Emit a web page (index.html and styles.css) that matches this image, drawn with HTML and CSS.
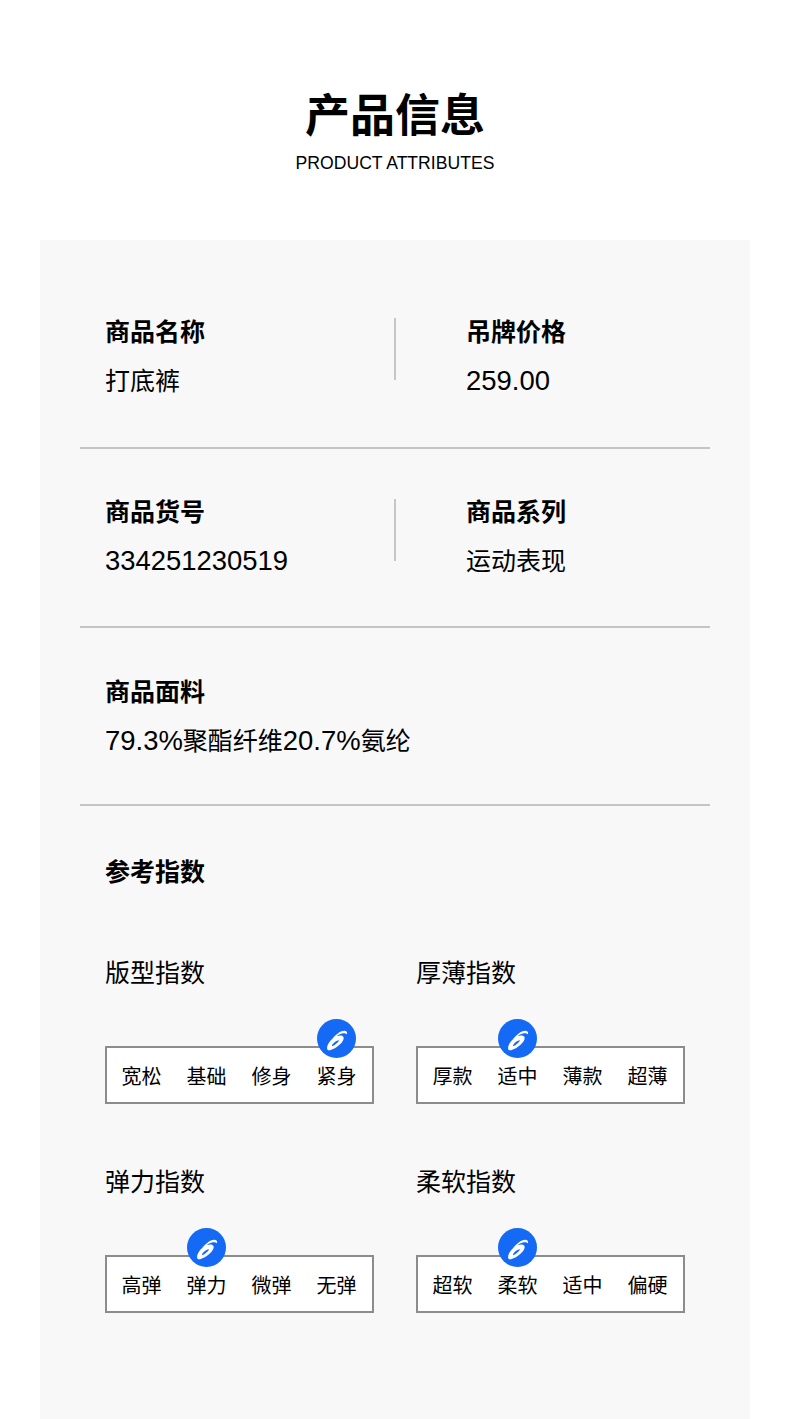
FILE: index.html
```html
<!DOCTYPE html>
<html lang="zh-CN">
<head>
<meta charset="utf-8">
<title>产品信息</title>
<link rel="stylesheet" href="styles.css">
</head>
<body>
<svg class="defs" width="0" height="0" aria-hidden="true">
  <symbol id="logo" viewBox="0 0 39 39">
    <circle cx="19.5" cy="19.5" r="19.5" fill="#1469f5"/>
    <path fill="#fff" fill-rule="evenodd" d="M10.500 30.800C9.200 28 11.300 23.500 15.200 20C18.300 16 23 11.800 27.200 11.700C29.500 11.600 30.500 13 30 15.300C28.800 14.200 26.800 14 25 14.600C22.800 15.200 21 16.100 19.800 17.100C22.300 16.300 25.200 16.300 26.300 17.700C27.500 19.400 25.900 22.800 22.800 25.600C19.700 28.400 16 30.600 13.200 31.200C12 31.500 10.900 31.400 10.500 30.800ZM15 27.200C16.600 26.700 18.800 25.200 20.300 23.700C21.400 22.600 22.100 21.500 21.900 21.200C21.100 21 19.500 21.800 18.200 22.800C16.200 24.300 14.800 26 15 27.200Z"/>
  </symbol>
</svg>
<header class="head">
  <h1 class="head-title">产品信息</h1>
  <p class="head-sub">PRODUCT ATTRIBUTES</p>
</header>
<main class="card">
  <section class="row row-first">
    <div class="cell cell-left"><h2 class="label">商品名称</h2><p class="value">打底裤</p></div>
    <div class="cell cell-right"><h2 class="label">吊牌价格</h2><p class="value"><span class="num">259.00</span></p></div>
  </section>
  <section class="row row-second">
    <div class="cell cell-left"><h2 class="label">商品货号</h2><p class="value"><span class="num">334251230519</span></p></div>
    <div class="cell cell-right"><h2 class="label">商品系列</h2><p class="value">运动表现</p></div>
  </section>
  <section class="row row-third">
    <div class="cell"><h2 class="label">商品面料</h2><p class="value"><span class="num">79.3%</span>聚酯纤维<span class="num">20.7%</span>氨纶</p></div>
  </section>
  <section class="index">
    <h2 class="label">参考指数</h2>
    <div class="gauges">
      <div class="gauge">
        <h3 class="gauge-title">版型指数</h3>
        <div class="scale">
          <span class="opt">宽松</span><span class="opt">基础</span><span class="opt">修身</span>
          <span class="opt on">紧身<svg class="mark"><use href="#logo"/></svg></span>
        </div>
      </div>
      <div class="gauge">
        <h3 class="gauge-title">厚薄指数</h3>
        <div class="scale">
          <span class="opt">厚款</span>
          <span class="opt on">适中<svg class="mark"><use href="#logo"/></svg></span>
          <span class="opt">薄款</span><span class="opt">超薄</span>
        </div>
      </div>
      <div class="gauge">
        <h3 class="gauge-title">弹力指数</h3>
        <div class="scale">
          <span class="opt">高弹</span>
          <span class="opt on">弹力<svg class="mark"><use href="#logo"/></svg></span>
          <span class="opt">微弹</span><span class="opt">无弹</span>
        </div>
      </div>
      <div class="gauge">
        <h3 class="gauge-title">柔软指数</h3>
        <div class="scale">
          <span class="opt">超软</span>
          <span class="opt on">柔软<svg class="mark"><use href="#logo"/></svg></span>
          <span class="opt">适中</span><span class="opt">偏硬</span>
        </div>
      </div>
    </div>
  </section>
</main>
</body>
</html>
```
FILE: styles.css
```css
* { box-sizing: border-box; }
html, body { margin: 0; padding: 0; }
body {
  width: 790px;
  height: 1419px;
  overflow: hidden;
  background: #fff;
  color: #000;
  font-family: "Liberation Sans", "Noto Sans CJK SC", sans-serif;
}
.defs { position: absolute; }
.head { height: 240px; padding-top: 87px; text-align: center; }
.head-title { margin: 0; font-size: 45px; line-height: 60px; font-weight: 700; }
.head-sub { margin: 0; font-size: 17.6px; line-height: 32px; }
.card { margin: 0 40px; height: 1179px; background: #f8f8f8; padding: 0 40px; }
.row { display: flex; padding-top: 50px; border-bottom: 2px solid #c4c4c4; }
.row-first { height: 209px; padding-top: 78px; }
.row-second { height: 179px; }
.row-third { height: 178px; }
.cell { padding-left: 25px; }
.cell-left { width: 316px; height: 62px; border-right: 2px solid #c6c6c6; }
.cell-right { padding-left: 70px; }
.label { margin: -1px 0 0; font-size: 25px; line-height: 30px; font-weight: 700; white-space: nowrap; }
.row-second .label { margin-top: -2px; }
.value { margin: 19px 0 0; font-size: 25px; line-height: 30px; white-space: nowrap; }
.num { font-size: 27.45px; line-height: 1; }
.index { padding: 52px 25px 0; }
.gauges { display: grid; grid-template-columns: 269px 269px; column-gap: 42px; row-gap: 63px; margin-top: 71px; }
.gauge-title { margin: 0; font-size: 25px; line-height: 30px; font-weight: 400; }
.scale { display: flex; gap: 25px; height: 58px; margin-top: 58px; padding: 3px 0 0 14.5px; align-items: center; background: #fff; border: 2px solid #8c8c8c; }
.opt { position: relative; width: 40px; flex: none; font-size: 20px; line-height: 28px; white-space: nowrap; }
.mark { position: absolute; left: 0.5px; top: -44px; width: 39px; height: 39px; }
```
